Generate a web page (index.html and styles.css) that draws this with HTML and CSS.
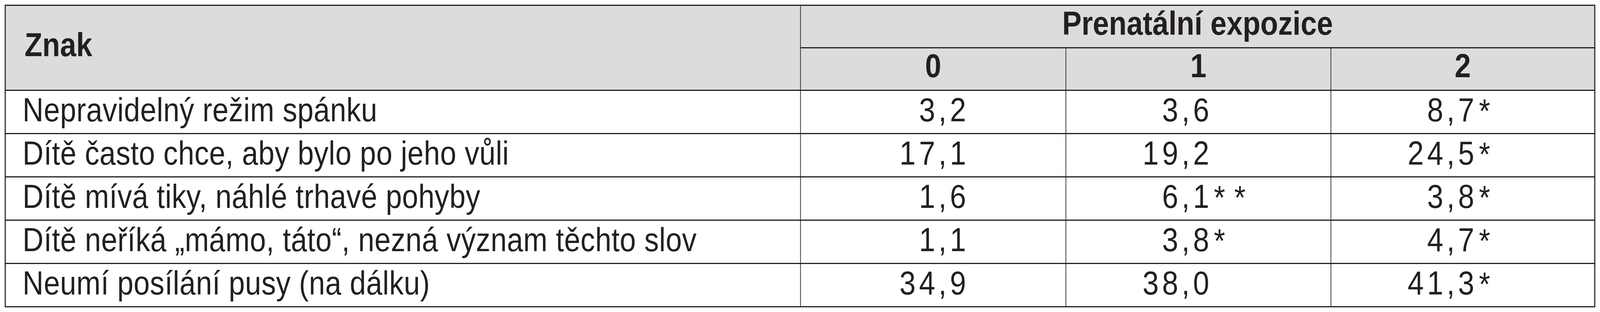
FILE: index.html
```html
<!DOCTYPE html>
<html lang="cs">
<head>
<meta charset="utf-8">
<title>Prenatální expozice</title>
<link rel="stylesheet" href="styles.css">
</head>
<body>
<div class="frame">
  <div class="tbl">
    <div class="cell head sign-h">Znak</div>
    <div class="cell head grp">Prenatální expozice</div>
    <div class="cell head lvl">0</div>
    <div class="cell head lvl">1</div>
    <div class="cell head lvl">2</div>

    <div class="cell sign">Nepravidelný režim spánku</div>
    <div class="cell v"><span class="n n0">3,2</span></div>
    <div class="cell v"><span class="n">3,6</span></div>
    <div class="cell v"><span class="n">8,7</span><span class="st">*</span></div>

    <div class="cell sign">Dítě často chce, aby bylo po jeho vůli</div>
    <div class="cell v"><span class="n n0">17,1</span></div>
    <div class="cell v"><span class="n">19,2</span></div>
    <div class="cell v"><span class="n">24,5</span><span class="st">*</span></div>

    <div class="cell sign">Dítě mívá tiky, náhlé trhavé pohyby</div>
    <div class="cell v"><span class="n n0">1,6</span></div>
    <div class="cell v"><span class="n">6,1</span><span class="st st2">**</span></div>
    <div class="cell v"><span class="n">3,8</span><span class="st">*</span></div>

    <div class="cell sign">Dítě neříká „mámo, táto“, nezná význam těchto slov</div>
    <div class="cell v"><span class="n n0">1,1</span></div>
    <div class="cell v"><span class="n">3,8</span><span class="st">*</span></div>
    <div class="cell v"><span class="n">4,7</span><span class="st">*</span></div>

    <div class="cell sign">Neumí posílání pusy (na dálku)</div>
    <div class="cell v"><span class="n n0">34,9</span></div>
    <div class="cell v"><span class="n">38,0</span></div>
    <div class="cell v"><span class="n">41,3</span><span class="st">*</span></div>
  </div>
</div>
</body>
</html>
```

FILE: styles.css
```css
html {
  overflow: hidden;
  background: #ffffff;
}

body {
  margin: 0;
  background: #ffffff;
  font-family: "Liberation Sans", Arial, sans-serif;
  color: #231f20;
}

/* The browser viewport is 4096px wide; the design is drawn on a
   4745px-wide canvas and compressed horizontally to fit it. */
.frame {
  width: 4745px;
  padding: 12px 0 0 14px;
  box-sizing: border-box;
  transform: scaleX(0.86322);
  transform-origin: 0 0;
}

.tbl {
  display: grid;
  grid-template-columns: 2356px 785px 784px 780px;
  grid-template-rows: 106px 106px 108px 108px 108px 108px 108px;
  column-gap: 2px;
  row-gap: 3px;
  width: max-content;
  border: 3px solid #231f20;
  background: #231f20;
  font-size: 86px;
  line-height: 1.15;
}

.cell {
  display: flex;
  align-items: center;
  background: #ffffff;
  white-space: nowrap;
  padding-bottom: 12px;
  box-sizing: border-box;
}

.head {
  background: #dcdcde;
  font-weight: bold;
  justify-content: center;
  padding-bottom: 17px;
}

.sign-h {
  grid-row: 1 / span 2;
  justify-content: flex-start;
  padding-left: 56px;
}

.grp {
  grid-column: 2 / span 3;
}

.sign {
  padding-left: 50px;
  letter-spacing: 0.6px;
}

.n {
  display: inline-block;
  width: 434px;
  text-align: right;
  letter-spacing: 10px;
}

.n0 {
  width: 500px;
}

.st {
  margin-left: 4px;
  margin-top: 6px;
}

.st2 {
  letter-spacing: 27px;
}
```
